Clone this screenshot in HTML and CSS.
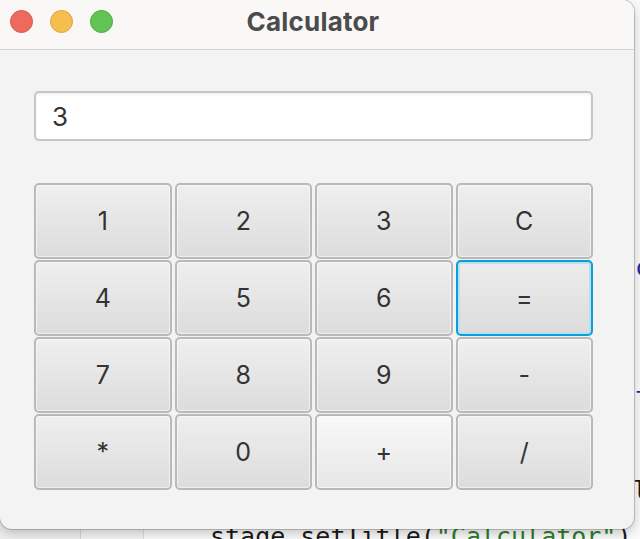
FILE: index.html
```html
<!DOCTYPE html>
<html>
<head>
<meta charset="utf-8">
<link rel="stylesheet" href="styles.css">
</head>
<body>
<div class="editor">
  <div class="gutter g1"></div>
  <div class="gutter g2"></div>
  <span class="code kw c1">c</span>
  <span class="code kw c2">t</span>
  <span class="code c3">l</span>
  <span class="code c4">stage.setTitle(<span class="str">"Calculator"</span>)</span>
</div>
<div class="window">
  <div class="titlebar">
    <div class="lights">
      <span class="light red"></span>
      <span class="light yellow"></span>
      <span class="light green"></span>
    </div>
    <div class="title">Calculator</div>
    <div class="spacer"></div>
  </div>
  <div class="content">
    <div class="field">3</div>
    <div class="keys">
      <button class="key">1</button>
      <button class="key">2</button>
      <button class="key">3</button>
      <button class="key">C</button>
      <button class="key">4</button>
      <button class="key">5</button>
      <button class="key">6</button>
      <button class="key focused">=</button>
      <button class="key">7</button>
      <button class="key">8</button>
      <button class="key">9</button>
      <button class="key">-</button>
      <button class="key">*</button>
      <button class="key">0</button>
      <button class="key hover">+</button>
      <button class="key">/</button>
    </div>
  </div>
</div>
</body>
</html>
```

FILE: styles.css
```css
html, body {
  margin: 0;
  padding: 0;
  width: 640px;
  height: 539px;
  overflow: hidden;
  background: #f9f9f9;
  font-family: Inter, "Liberation Sans", sans-serif;
}

.editor {
  position: absolute;
  inset: 0;
  background: #fafafa;
  z-index: 0;
}

.gutter {
  position: absolute;
  top: 0;
  bottom: 0;
}

.g1 {
  left: 0;
  width: 80px;
  background: #efefef;
  border-right: 1px solid #d6d6d6;
}

.g2 {
  left: 81px;
  width: 62px;
  background: #f4f4f4;
  border-right: 1px solid #dddddd;
}

.code {
  position: absolute;
  font-family: "DejaVu Sans Mono", "Liberation Mono", monospace;
  font-size: 25px;
  line-height: 30px;
  color: #1a1a1a;
  white-space: pre;
}

.kw { color: #1b2fa3; }
.str { color: #2f7d2a; }

.c1 { left: 635px; top: 253px; }
.c2 { left: 635px; top: 382px; }
.c3 { left: 633px; top: 476px; }
.c4 { left: 210px; top: 522px; }

.window {
  position: relative;
  z-index: 1;
  width: 634px;
  height: 529px;
  border-radius: 0 12px 12px 12px;
  background: #f3f3f3;
  overflow: hidden;
  box-shadow: 0 0 0 1px rgba(0, 0, 0, 0.18), 0 4px 12px rgba(0, 0, 0, 0.22);
}

.titlebar {
  height: 50px;
  box-sizing: border-box;
  background: #f9f8f7;
  border-bottom: 1px solid #d3d3d3;
  display: grid;
  grid-template-columns: 1fr auto 1fr;
  align-items: start;
  padding-top: 10px;
}

.lights {
  display: flex;
  gap: 17px;
  padding-left: 10px;
}

.light {
  width: 23px;
  height: 23px;
  border-radius: 50%;
  box-sizing: border-box;
}

.red { background: #ee6a5f; border: 1px solid #d9534a; }
.yellow { background: #f6be4f; border: 1px solid #dea236; }
.green { background: #61c454; border: 1px solid #4ca93f; }

.title {
  font-family: Inter, "Liberation Sans", sans-serif;
  font-weight: 700;
  font-size: 26px;
  letter-spacing: 0.2px;
  line-height: 23px;
  color: #4b4b4b;
  margin-right: 8px;
}

.content {
  padding: 41px 41px 0 34px;
  display: flex;
  flex-direction: column;
  gap: 42px;
}

.field {
  height: 50px;
  box-sizing: border-box;
  background: #ffffff;
  border: 2px solid #c6c6c6;
  border-radius: 5px;
  box-shadow: inset 0 2px 3px rgba(0, 0, 0, 0.05);
  padding-left: 16px;
  display: flex;
  align-items: center;
  font-size: 26px;
  color: #333333;
}

.keys {
  display: grid;
  grid-template-columns: repeat(4, 1fr);
  grid-auto-rows: 76px;
  column-gap: 3px;
  row-gap: 1px;
}

.key {
  margin: 0;
  padding: 0;
  box-sizing: border-box;
  border: 2px solid #b9b9b9;
  border-radius: 5px;
  background: linear-gradient(#efefef, #dcdcdc);
  box-shadow: inset 0 0 0 1px rgba(255, 255, 255, 0.55);
  font-family: Inter, "Liberation Sans", sans-serif;
  font-size: 25px;
  color: #333333;
  display: flex;
  align-items: center;
  justify-content: center;
}

.key.hover {
  background: linear-gradient(#f8f8f8, #e7e7e7);
}

.key.focused {
  border-color: #0a9fd6;
  box-shadow: inset 0 0 0 2px #b9e0f0;
  background: linear-gradient(#ececec, #dcdcdc);
}
```
